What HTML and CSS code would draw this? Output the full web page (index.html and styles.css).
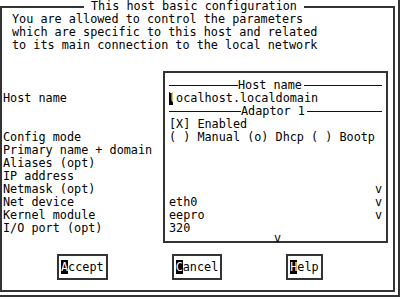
FILE: index.html
```html
<!DOCTYPE html>
<html>
<head>
<meta charset="utf-8">
<link rel="stylesheet" href="styles.css">
</head>
<body>
<div class="screen">
  <fieldset class="dialog">
    <legend class="title">This host basic configuration</legend>
    <div class="desc">
      <div class="row">You are allowed to control the parameters</div>
      <div class="row">which are specific to this host and related</div>
      <div class="row">to its main connection to the local network</div>
    </div>
    <div class="main">
      <div class="labels">
        <div class="row"></div>
        <div class="row"></div>
        <div class="row"></div>
        <div class="row">Host name</div>
        <div class="row"></div>
        <div class="row"></div>
        <div class="row">Config mode</div>
        <div class="row">Primary name + domain</div>
        <div class="row">Aliases (opt)</div>
        <div class="row">IP address</div>
        <div class="row">Netmask (opt)</div>
        <div class="row">Net device</div>
        <div class="row">Kernel module</div>
        <div class="row">I/O port (opt)</div>
      </div>
      <div class="box">
        <div class="row sep"><span class="line lead1"></span><span>Host name</span><span class="line fill"></span></div>
        <div class="row"><span class="cursor">l</span>ocalhost.localdomain</div>
        <div class="row sep"><span class="line lead2"></span><span>Adaptor 1</span><span class="line fill"></span></div>
        <div class="row">[X] Enabled</div>
        <div class="row">( ) Manual (o) Dhcp ( ) Bootp</div>
        <div class="row"></div>
        <div class="row"></div>
        <div class="row"></div>
        <div class="row split"><span></span><span>v</span></div>
        <div class="row split"><span>eth0</span><span>v</span></div>
        <div class="row split"><span>eepro</span><span>v</span></div>
        <div class="row">320</div>
        <span class="more">v</span>
      </div>
    </div>
    <div class="buttons">
      <div class="btn"><span class="hot">A</span>ccept</div>
      <div class="btn"><span class="hot">C</span>ancel</div>
      <div class="btn"><span class="hot">H</span>elp</div>
    </div>
  </fieldset>
</div>
</body>
</html>
```
FILE: styles.css
```css
html, body {
  margin: 0;
  padding: 0;
  background: #fff;
}
body {
  font-family: "DejaVu Sans Mono", "Liberation Mono", monospace;
  font-size: 11.8px;
  color: #000;
  width: 400px;
  height: 299px;
  overflow: hidden;
}
.screen {
  box-sizing: border-box;
  width: 400px;
  height: 297px;
  border-right: 2px solid #333;
  border-bottom: 2px solid #333;
  padding-right: 3px;
  padding-bottom: 3px;
}
.dialog {
  box-sizing: border-box;
  margin: 0;
  padding: 0 0 0 1px;
  width: 395px;
  height: 292px;
  border: 2px solid #333;
  min-width: 0;
}
.title {
  margin-left: 81px;
  padding: 0 7px;
  line-height: 13.08px;
  height: 13.08px;
}
.row {
  height: 13.08px;
  line-height: 13.08px;
  white-space: pre;
}
.desc {
  padding-left: 9px;
}
.main {
  display: flex;
  margin-top: 0;
}
.labels {
  width: 160px;
  flex: none;
}
.box {
  position: relative;
  box-sizing: border-box;
  width: 225px;
  margin-top: 18.7px;
  align-self: flex-start;
  border: 2px solid #333;
  padding: 5.5px 4px 5.6px 4px;
}
.sep {
  display: flex;
  align-items: center;
}
.line {
  display: block;
  height: 1px;
  background: #111;
}
.lead1 { width: 69px; }
.lead2 { width: 72px; }
.fill { flex: 1; margin-left: 2px; }
.split {
  display: flex;
  justify-content: space-between;
}
.cursor {
  display: inline-block;
  width: 7.1px;
  background: linear-gradient(to right, #000 0, #000 4px, transparent 4px);
  color: #fff;
}
.more {
  position: absolute;
  left: 109px;
  bottom: -4px;
  line-height: 13px;
}
.buttons {
  display: flex;
  gap: 64px;
  padding-left: 54px;
  margin-top: 10.5px;
}
.btn {
  border: 2px solid #333;
  padding: 0 2px;
  line-height: 22.7px;
  height: 22.7px;
}
.hot {
  background: #000;
  color: #fff;
}
```
